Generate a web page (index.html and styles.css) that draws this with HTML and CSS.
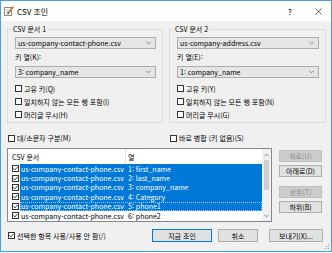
FILE: index.html
```html
<!DOCTYPE html>
<html lang="ko">
<head>
    <meta charset="UTF-8">
    <meta name="viewport" content="width=device-width, initial-scale=1.0">
    <title>CSV 조인</title>
    <link rel="stylesheet" href="styles.css">
</head>
<body>
    <div class="window">
        <div class="titlebar">
            <svg class="app-icon" viewBox="0 0 10 10">
                <rect x="0.5" y="1.5" width="7" height="8" fill="#fff" stroke="#8a8a8a"/>
                <line x1="2" y1="4" x2="5" y2="4" stroke="#b5b5b5"/>
                <line x1="2" y1="6" x2="5" y2="6" stroke="#b5b5b5"/>
                <line x1="9.3" y1="0.7" x2="4" y2="7.5" stroke="#d2691e" stroke-width="1.6"/>
                <line x1="4.6" y1="6.8" x2="3.6" y2="8.2" stroke="#333" stroke-width="1.2"/>
            </svg>
            <span class="title">CSV 조인</span>
            <span class="help">?</span>
            <svg class="close" viewBox="0 0 8 8">
                <path d="M0.5 0.5 L7.5 7.5 M7.5 0.5 L0.5 7.5" stroke="#222" stroke-width="0.8"/>
            </svg>
        </div>

        <div class="content">
            <div class="groups">
                <fieldset class="group">
                    <legend>CSV 문서 1</legend>
                    <div class="group-body">
                        <div class="combo">
                            <span>us-company-contact-phone.csv</span>
                            <svg class="chev" viewBox="0 0 6 4"><path d="M0.5 0.5 L3 3 L5.5 0.5" fill="none" stroke="#555" stroke-width="0.8"/></svg>
                        </div>
                        <div class="field-label">키 열(K):</div>
                        <div class="combo">
                            <span>3: company_name</span>
                            <svg class="chev" viewBox="0 0 6 4"><path d="M0.5 0.5 L3 3 L5.5 0.5" fill="none" stroke="#555" stroke-width="0.8"/></svg>
                        </div>
                        <div class="checks">
                            <label class="check"><span class="cb"></span>고유 키(Q)</label>
                            <label class="check"><span class="cb"></span>일치하지 않는 모든 행 포함(I)</label>
                            <label class="check"><span class="cb"></span>머리글 무시(H)</label>
                        </div>
                    </div>
                </fieldset>
                <fieldset class="group">
                    <legend>CSV 문서 2</legend>
                    <div class="group-body">
                        <div class="combo">
                            <span>us-company-address.csv</span>
                            <svg class="chev" viewBox="0 0 6 4"><path d="M0.5 0.5 L3 3 L5.5 0.5" fill="none" stroke="#555" stroke-width="0.8"/></svg>
                        </div>
                        <div class="field-label">키 열(E):</div>
                        <div class="combo">
                            <span>1: company_name</span>
                            <svg class="chev" viewBox="0 0 6 4"><path d="M0.5 0.5 L3 3 L5.5 0.5" fill="none" stroke="#555" stroke-width="0.8"/></svg>
                        </div>
                        <div class="checks">
                            <label class="check"><span class="cb"></span>고유 키(Y)</label>
                            <label class="check"><span class="cb"></span>일치하지 않는 모든 행 포함(N)</label>
                            <label class="check"><span class="cb"></span>머리글 무시(G)</label>
                        </div>
                    </div>
                </fieldset>
            </div>

            <div class="options">
                <label class="check"><span class="cb"></span>대/소문자 구분(M)</label>
                <label class="check"><span class="cb"></span>바로 병합 (키 없음)(S)</label>
            </div>

            <div class="list-area">
                <div class="list">
                    <div class="list-main">
                        <div class="list-head">
                            <div class="col1">CSV 문서</div>
                            <div class="col2">열</div>
                        </div>
                        <div class="row sel">
                            <span class="cb on"><svg viewBox="0 0 5 5"><polyline points="0.4,2.4 1.9,3.9 4.6,0.9" fill="none" stroke="#222" stroke-width="0.9"/></svg></span>
                            <div class="cells"><span class="col1">us-company-contact-phone.csv</span><span class="col2">1: first_name</span></div>
                        </div>
                        <div class="row sel">
                            <span class="cb on"><svg viewBox="0 0 5 5"><polyline points="0.4,2.4 1.9,3.9 4.6,0.9" fill="none" stroke="#222" stroke-width="0.9"/></svg></span>
                            <div class="cells"><span class="col1">us-company-contact-phone.csv</span><span class="col2">2: last_name</span></div>
                        </div>
                        <div class="row sel">
                            <span class="cb on"><svg viewBox="0 0 5 5"><polyline points="0.4,2.4 1.9,3.9 4.6,0.9" fill="none" stroke="#222" stroke-width="0.9"/></svg></span>
                            <div class="cells"><span class="col1">us-company-contact-phone.csv</span><span class="col2">3: company_name</span></div>
                        </div>
                        <div class="row sel">
                            <span class="cb on"><svg viewBox="0 0 5 5"><polyline points="0.4,2.4 1.9,3.9 4.6,0.9" fill="none" stroke="#222" stroke-width="0.9"/></svg></span>
                            <div class="cells"><span class="col1">us-company-contact-phone.csv</span><span class="col2">4: Category</span></div>
                        </div>
                        <div class="row sel focus">
                            <span class="cb on"><svg viewBox="0 0 5 5"><polyline points="0.4,2.4 1.9,3.9 4.6,0.9" fill="none" stroke="#222" stroke-width="0.9"/></svg></span>
                            <div class="cells"><span class="col1">us-company-contact-phone.csv</span><span class="col2">5: phone1</span></div>
                        </div>
                        <div class="row">
                            <span class="cb on"><svg viewBox="0 0 5 5"><polyline points="0.4,2.4 1.9,3.9 4.6,0.9" fill="none" stroke="#222" stroke-width="0.9"/></svg></span>
                            <div class="cells"><span class="col1">us-company-contact-phone.csv</span><span class="col2">6: phone2</span></div>
                        </div>
                    </div>
                    <div class="scrollbar">
                        <div class="sb-arrow"><svg viewBox="0 0 6 4"><path d="M0.5 3.5 L3 1 L5.5 3.5" fill="none" stroke="#606060" stroke-width="0.9"/></svg></div>
                        <div class="thumb"></div>
                        <div class="sb-space"></div>
                        <div class="sb-arrow"><svg viewBox="0 0 6 4"><path d="M0.5 0.5 L3 3 L5.5 0.5" fill="none" stroke="#606060" stroke-width="0.9"/></svg></div>
                    </div>
                </div>
                <div class="side-buttons">
                    <button class="btn" disabled>위로(U)</button>
                    <button class="btn">아래로(D)</button>
                    <button class="btn gap" disabled>상위(T)</button>
                    <button class="btn">하위(B)</button>
                </div>
            </div>

            <div class="footer">
                <label class="check"><span class="cb on"><svg viewBox="0 0 5 5"><polyline points="0.4,2.4 1.9,3.9 4.6,0.9" fill="none" stroke="#222" stroke-width="0.9"/></svg></span>선택한 항목 사용/사용 안 함(/)</label>
                <div class="footer-buttons">
                    <button class="btn default join">지금 조인</button>
                    <button class="btn cancel">취소</button>
                    <button class="btn export">보내기(X)...</button>
                </div>
            </div>
        </div>

        <svg class="grip" viewBox="0 0 6 6">
            <rect x="4" y="0" width="1" height="1" fill="#b0b0b0"/>
            <rect x="2" y="2" width="1" height="1" fill="#b0b0b0"/>
            <rect x="4" y="2" width="1" height="1" fill="#b0b0b0"/>
            <rect x="0" y="4" width="1" height="1" fill="#b0b0b0"/>
            <rect x="2" y="4" width="1" height="1" fill="#b0b0b0"/>
            <rect x="4" y="4" width="1" height="1" fill="#b0b0b0"/>
        </svg>
    </div>
</body>
</html>
```

FILE: styles.css
```css
* {
    box-sizing: border-box;
}
body {
    margin: 0;
    font-family: "Noto Sans CJK KR", "Noto Sans", sans-serif;
    font-size: 7px;
    color: #000;
    background: #fff;
}
.window {
    position: relative;
    width: 332px;
    height: 252px;
    border: 1px solid #4a9fe0;
    background: #f0f0f0;
    display: flex;
    flex-direction: column;
}
.titlebar {
    height: 20px;
    background: #fff;
    display: flex;
    align-items: center;
    padding-left: 3px;
}
.app-icon {
    width: 10px;
    height: 10px;
    margin-right: 3px;
}
.title {
    font-size: 8px;
}
.help {
    margin-left: auto;
    width: 10px;
    text-align: center;
    font-size: 8px;
    margin-right: 20px;
}
.close {
    width: 7px;
    height: 7px;
    margin-right: 9px;
}
.content {
    flex: 1;
    padding: 3px 5px 0 6px;
    display: flex;
    flex-direction: column;
}
.groups {
    display: grid;
    grid-template-columns: 156px 157px;
    column-gap: 6px;
}
.group {
    margin: 0;
    padding: 0;
    border: 1px solid #dcdcdc;
    min-width: 0;
}
.group legend {
    margin-left: 4px;
    padding: 0 1px;
    line-height: 10px;
}
.group-body {
    padding: 3px 6px 1px 7px;
}
.combo {
    height: 12px;
    background: #e5e5e5;
    border: 1px solid #adadad;
    display: flex;
    align-items: center;
    padding: 0 4px 0 2px;
}
.combo span {
    flex: 1;
    white-space: nowrap;
    overflow: hidden;
}
.chev {
    width: 5px;
    height: 4px;
}
.field-label {
    margin-top: 3px;
    line-height: 11px;
}
.field-label + .combo {
    margin-top: 3px;
}
.checks {
    margin-top: 4px;
}
.check {
    display: flex;
    align-items: center;
    height: 13px;
    white-space: nowrap;
}
.cb {
    flex: none;
    width: 7px;
    height: 7px;
    border: 1px solid #333;
    background: #fff;
    margin-right: 2px;
    display: inline-flex;
}
.cb svg {
    width: 5px;
    height: 5px;
}
.options {
    margin-top: 9px;
    display: grid;
    grid-template-columns: 156px 157px;
    column-gap: 6px;
}
.options .check {
    height: 12px;
    padding-left: 1px;
}
.list-area {
    margin-top: 4px;
    padding-right: 4px;
    display: flex;
    gap: 7px;
}
.list {
    flex: 1;
    height: 74px;
    border: 1px solid #828790;
    background: #fff;
    display: flex;
}
.list-main {
    flex: 1;
}
.list-head {
    height: 15px;
    display: flex;
}
.list-head .col1 {
    width: 118px;
    padding-left: 4px;
    border-right: 1px solid #e5e5e5;
    display: flex;
    align-items: center;
}
.list-head .col2 {
    padding-left: 2px;
    display: flex;
    align-items: center;
}
.row {
    height: 9.4px;
    display: flex;
    align-items: center;
    padding-left: 4px;
}
.row .cb {
    margin-right: 1px;
}
.cells {
    flex: 1;
    height: 100%;
    display: flex;
    align-items: center;
    white-space: nowrap;
}
.row.sel .cells {
    background: #0078d7;
    color: #fff;
}
.row.focus .cells {
    outline: 1px dotted #9fd0ff;
    outline-offset: -1px;
}
.cells .col1 {
    width: 108px;
    padding-left: 1px;
}
.scrollbar {
    width: 9px;
    background: #f0f0f0;
    display: flex;
    flex-direction: column;
    align-items: center;
}
.sb-arrow {
    height: 11px;
    display: flex;
    align-items: center;
    justify-content: center;
}
.sb-arrow svg {
    width: 5px;
    height: 4px;
}
.thumb {
    width: 5px;
    height: 30px;
    background: #cdcdcd;
}
.sb-space {
    flex: 1;
}
.side-buttons {
    width: 43px;
    padding-top: 2px;
    display: flex;
    flex-direction: column;
    gap: 3px;
}
.btn {
    height: 12px;
    padding: 0;
    border: 1px solid #adadad;
    background: #e1e1e1;
    font: inherit;
    color: #000;
    white-space: nowrap;
}
.btn:disabled {
    background: #cccccc;
    border-color: #bfbfbf;
    color: #8d8d8d;
}
.btn.gap {
    margin-top: 6px;
}
.footer {
    margin-top: 7px;
    height: 13px;
    display: flex;
    align-items: center;
}
.footer .check {
    padding-left: 1px;
}
.footer-buttons {
    margin-left: auto;
    margin-right: 3px;
    display: flex;
}
.footer-buttons .btn {
    height: 13px;
}
.btn.default {
    border-color: #0078d7;
}
.join {
    width: 60px;
}
.cancel {
    width: 40px;
    margin-left: 6px;
}
.export {
    width: 54px;
    margin-left: 11px;
}
.grip {
    position: absolute;
    right: 1px;
    bottom: 1px;
    width: 6px;
    height: 6px;
}
```
